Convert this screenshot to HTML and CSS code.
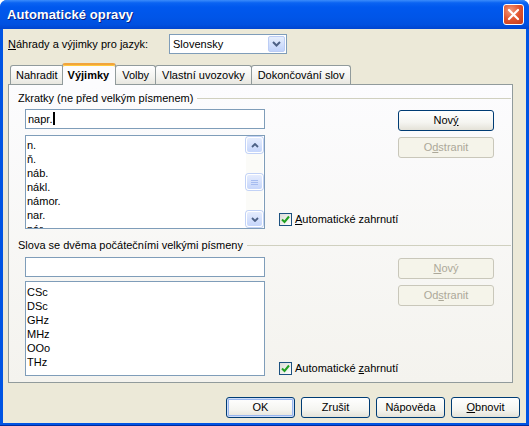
FILE: index.html
```html
<!DOCTYPE html>
<html lang="cs">

<head>
    <meta charset="UTF-8">
    <title>Automatické opravy</title>
    <link rel="stylesheet" href="styles.css">
</head>

<body>
    <div class="window">
        <div class="titlebar">
            <span class="title">Automatické opravy</span>
            <span class="close">
                <svg width="13" height="13" viewBox="0 0 13 13">
                    <path d="M2 2 L11 11 M11 2 L2 11" stroke="#fff" stroke-width="2.2" stroke-linecap="round" />
                </svg>
            </span>
        </div>
        <div class="client">
            <div class="lang-row">
                <span class="lang-label"><u>N</u>áhrady a výjimky pro jazyk:</span>
                <div class="combo">
                    <span class="combo-text">Slovensky</span>
                    <span class="combo-btn">
                        <svg width="9" height="6" viewBox="0 0 9 6">
                            <path d="M1 1 L4.5 4.5 L8 1" fill="none" stroke="#4d6185" stroke-width="2" />
                        </svg>
                    </span>
                </div>
            </div>

            <div class="tabs">
                <div class="tab">Nahradit</div>
                <div class="tab active">Výjimky</div>
                <div class="tab">Volby</div>
                <div class="tab">Vlastní uvozovky</div>
                <div class="tab">Dokončování slov</div>
            </div>

            <div class="panel">
                <!-- zkratky -->
                <div class="group">
                    <div class="group-title"><span>Zkratky (ne před velkým písmenem)</span></div>
                    <div class="group-body">
                        <div class="entry-col">
                            <div class="textbox">napr.<span class="caret"></span></div>
                            <div class="listbox list-1">
                                <div class="list-items">
                                    <div>n.</div>
                                    <div>ň.</div>
                                    <div>náb.</div>
                                    <div>nákl.</div>
                                    <div>námor.</div>
                                    <div>nar.</div>
                                    <div>nár.</div>
                                </div>
                                <div class="scrollbar">
                                    <span class="sb-btn">
                                        <svg width="8" height="5" viewBox="0 0 8 5">
                                            <path d="M1 4 L4 1 L7 4" fill="none" stroke="#4d6185" stroke-width="1.8" />
                                        </svg>
                                    </span>
                                    <span class="sb-btn thumb">
                                        <svg width="7" height="7" viewBox="0 0 7 7">
                                            <path d="M0 1.5 H7 M0 3.5 H7 M0 5.5 H7" stroke="#a6bcf0" stroke-width="1" />
                                        </svg>
                                    </span>
                                    <span class="sb-btn">
                                        <svg width="8" height="5" viewBox="0 0 8 5">
                                            <path d="M1 1 L4 4 L7 1" fill="none" stroke="#4d6185" stroke-width="1.8" />
                                        </svg>
                                    </span>
                                </div>
                            </div>
                        </div>
                        <div class="check-col">
                            <label class="check">
                                <span class="box">
                                    <svg width="9" height="9" viewBox="0 0 9 9">
                                        <path d="M1 4.5 L3.5 7 L8 1.5" fill="none" stroke="#21a121" stroke-width="2" />
                                    </svg>
                                </span>
                                <span><u>A</u>utomatické zahrnutí</span>
                            </label>
                        </div>
                        <div class="btn-col">
                            <button class="btn">Nov<u>ý</u></button>
                            <button class="btn" disabled>O<u>d</u>stranit</button>
                        </div>
                    </div>
                </div>

                <!-- dvě velká písmena -->
                <div class="group group-2">
                    <div class="group-title"><span>Slova se dvěma počátečními velkými písmeny</span></div>
                    <div class="group-body">
                        <div class="entry-col">
                            <div class="textbox"></div>
                            <div class="listbox list-2">
                                <div class="list-items">
                                    <div>CSc</div>
                                    <div>DSc</div>
                                    <div>GHz</div>
                                    <div>MHz</div>
                                    <div>OOo</div>
                                    <div>THz</div>
                                </div>
                            </div>
                        </div>
                        <div class="check-col">
                            <label class="check">
                                <span class="box">
                                    <svg width="9" height="9" viewBox="0 0 9 9">
                                        <path d="M1 4.5 L3.5 7 L8 1.5" fill="none" stroke="#21a121" stroke-width="2" />
                                    </svg>
                                </span>
                                <span>Automatické <u>z</u>ahrnutí</span>
                            </label>
                        </div>
                        <div class="btn-col">
                            <button class="btn" disabled><u>N</u>ový</button>
                            <button class="btn" disabled>Od<u>s</u>tranit</button>
                        </div>
                    </div>
                </div>
            </div>

            <div class="footer">
                <button class="btn default">OK</button>
                <button class="btn">Zrušit</button>
                <button class="btn">Nápověda</button>
                <button class="btn"><u>O</u>bnovit</button>
            </div>
        </div>
    </div>
</body>

</html>
```

FILE: styles.css
```css
* {
    margin: 0;
    padding: 0;
    box-sizing: border-box;
}

body {
    width: 529px;
    height: 426px;
    overflow: hidden;
    background: #fff;
    font-family: "Liberation Sans", Arial, sans-serif;
    font-size: 11px;
    line-height: 13px;
    color: #000;
}

u {
    text-decoration: underline;
    text-underline-offset: 1px;
}

/* okno */
.window {
    width: 529px;
    height: 426px;
    display: flex;
    flex-direction: column;
    background: #0054e3;
    border-radius: 7px 7px 0 0;
    border-bottom: 1px solid #002b9e;
}

.titlebar {
    height: 29px;
    flex: none;
    display: flex;
    align-items: center;
    justify-content: space-between;
    padding: 0 5px 0 7px;
    border-radius: 7px 7px 0 0;
    background: linear-gradient(#3b8cfb 0%, #0a63f2 10%, #0058ee 25%, #0055e8 60%, #0050e0 85%, #0044cf 100%);
}

.title {
    color: #fff;
    font-size: 13px;
    font-weight: bold;
    text-shadow: 1px 1px 0 #0a1e7c;
    letter-spacing: 0.1px;
}

.close {
    width: 21px;
    height: 21px;
    display: flex;
    align-items: center;
    justify-content: center;
    border: 1px solid #fff;
    border-radius: 3px;
    background: radial-gradient(circle at 35% 30%, #f29a7c 0%, #e0532e 50%, #c4391a 100%);
}

.client {
    flex: 1;
    margin: 0 3px 2px;
    background: #ece9d8;
    padding: 5px 6px 0 5px;
    display: flex;
    flex-direction: column;
}

/* jazyk */
.lang-row {
    display: flex;
    align-items: center;
    height: 20px;
}

.lang-label {
    width: 161px;
}

.combo {
    width: 118px;
    height: 20px;
    border: 1px solid #7f9db9;
    background: #fff;
    display: flex;
    align-items: center;
    justify-content: space-between;
    padding: 0 1px 0 3px;
}

.combo-btn {
    width: 17px;
    height: 16px;
    display: flex;
    align-items: center;
    justify-content: center;
    border: 1px solid #bccdf5;
    border-radius: 2px;
    background: linear-gradient(#e6eefc, #c1d3fb);
}

/* záložky */
.tabs {
    display: flex;
    align-items: flex-end;
    margin-top: 9px;
    padding-left: 2px;
    height: 22px;
    position: relative;
    z-index: 1;
}

.tab {
    height: 19px;
    padding: 3px 6px 0;
    border: 1px solid #919b9c;
    border-bottom: none;
    border-radius: 3px 3px 0 0;
    background: linear-gradient(#ffffff, #f3f3ef 60%, #e8e7e0);
    margin-bottom: 1px;
    margin-right: -1px;
    white-space: nowrap;
}

.tab.active {
    height: 22px;
    margin: 0 -1px 0 -2px;
    padding: 4px 6px 0 5px;
    font-weight: bold;
    background: #fcfcfe;
    border-top: 2px solid #f1a43c;
    box-shadow: inset 0 1px 0 #ffc83c;
    position: relative;
    z-index: 2;
}

.tabs .tab:first-child {
    margin-right: 0;
    padding: 3px 5px 0;
}

.panel {
    width: 505px;
    height: 299px;
    margin-top: -1px;
    border: 1px solid #919b9c;
    background: linear-gradient(#fcfcfe, #f4f3ee);
    padding: 7px 1px 0 9px;
}

/* skupiny */
.group-title {
    display: flex;
    align-items: center;
    gap: 4px;
}

.group-title::after {
    content: "";
    flex: 1;
    border-top: 1px solid #d0d0bf;
}

.group-body {
    display: flex;
    margin-top: 4px;
    padding-left: 7px;
}

.group-2 {
    margin-top: 10px;
}

.group-2 .group-body {
    margin-top: 5px;
}

.entry-col {
    flex: none;
    width: 240px;
    display: flex;
    flex-direction: column;
}

.textbox {
    height: 20px;
    border: 1px solid #7f9db9;
    background: #fff;
    padding: 3px 2px 0;
    display: flex;
    align-items: flex-start;
}

.caret {
    width: 2px;
    height: 13px;
    margin: -1px 0 0 1px;
    background: #000;
}

.listbox {
    border: 1px solid #7f9db9;
    background: #fff;
    display: flex;
    overflow: hidden;
}

.list-1 {
    height: 94px;
    margin-top: 6px;
}

.list-2 {
    height: 95px;
    margin-top: 4px;
}

.list-items {
    flex: 1;
    padding: 2px 0 0 1px;
    line-height: 14px;
}

.list-2 .list-items {
    padding-top: 3px;
}

.scrollbar {
    width: 17px;
    margin: 0 1px 0 0;
    padding: 1px 0;
    display: flex;
    flex-direction: column;
    justify-content: space-between;
    background: #fbfbf8;
}

.sb-btn {
    height: 16px;
    display: flex;
    align-items: center;
    justify-content: center;
    border: 1px solid #fff;
    border-radius: 3px;
    background: linear-gradient(#e5ecfd, #c6d6fb);
    box-shadow: 0 0 0 1px #c2d2f6;
}

.check-col {
    flex: none;
    width: 119px;
    margin-left: 14px;
    display: flex;
    align-items: flex-end;
    padding-bottom: 3px;
}

.group-2 .check-col {
    padding-bottom: 1px;
}

.check {
    display: flex;
    align-items: center;
    gap: 3px;
    white-space: nowrap;
}

.box {
    flex: none;
    width: 13px;
    height: 13px;
    border: 1px solid #1c5180;
    background: linear-gradient(135deg, #dcdcd7, #fff);
    display: flex;
    align-items: center;
    justify-content: center;
}

.btn-col {
    flex: none;
    display: flex;
    flex-direction: column;
    gap: 6px;
    padding-top: 1px;
}

/* tlačítka */
.btn {
    width: 96px;
    height: 21px;
    font: inherit;
    color: #000;
    border: 1px solid #003c74;
    border-radius: 3px;
    background: linear-gradient(#ffffff, #f5f5f1 60%, #e4e2d8);
}

.btn:disabled {
    color: #aca899;
    border-color: #c9c7ba;
    background: #f5f4ea;
}

.btn.default {
    box-shadow: inset 0 0 0 1px #cedcf9, inset 0 0 0 2px #98b6ee;
}

.footer {
    display: flex;
    justify-content: flex-end;
    gap: 6px;
    margin-top: 14px;
}

.footer .btn {
    width: 69px;
}
```
